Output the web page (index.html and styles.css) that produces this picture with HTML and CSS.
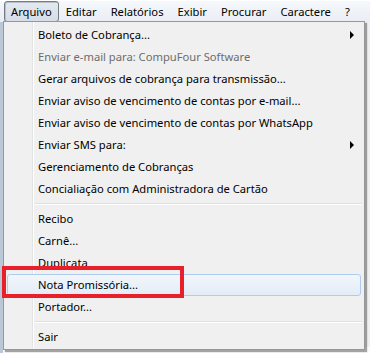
FILE: index.html
```html
<!DOCTYPE html>
<html lang="pt-BR">
<head>
  <meta charset="UTF-8">
  <title>Cobrança - Menu Arquivo</title>
  <link rel="stylesheet" href="styles.css">
</head>
<body>

  <div class="menubar">
    <span class="top-item active">Arquivo</span>
    <span class="top-item">Editar</span>
    <span class="top-item">Relatórios</span>
    <span class="top-item">Exibir</span>
    <span class="top-item">Procurar</span>
    <span class="top-item">Caractere</span>
    <span class="top-item">?</span>
  </div>

  <div class="workspace">
    <div class="grid-row"></div>
  </div>

  <!-- dropdown of the Arquivo menu -->
  <div class="dropdown">
    <div class="item has-sub">Boleto de Cobrança...</div>
    <div class="item disabled">Enviar e-mail para: CompuFour Software</div>
    <div class="item">Gerar arquivos de cobrança para transmissão...</div>
    <div class="item">Enviar aviso de vencimento de contas por e-mail...</div>
    <div class="item">Enviar aviso de vencimento de contas por WhatsApp</div>
    <div class="item has-sub">Enviar SMS para:</div>
    <div class="item">Gerenciamento de Cobranças</div>
    <div class="item">Concialiação com Administradora de Cartão</div>
    <div class="separator"></div>
    <div class="item">Recibo</div>
    <div class="item">Carnê...</div>
    <div class="item">Duplicata</div>
    <div class="item hover">Nota Promissória...</div>
    <div class="item">Portador...</div>
    <div class="separator"></div>
    <div class="item">Sair</div>
  </div>

  <div class="callout"></div>

</body>
</html>
```

FILE: styles.css
```css
html {
  overflow: hidden;
}

body {
  font-family: 'Noto Sans', 'Open Sans', sans-serif;
  font-size: 11.2px;
  color: #000;
  background-color: #f0f0f0;
  margin: 0;
  padding: 0;
  width: 370px;
  height: 353px;
  overflow: hidden;
  position: relative;
}

.menubar {
  height: 22px;
  display: flex;
  align-items: center;
  padding-left: 4px;
  background: linear-gradient(#f5f8fc, #e9eef4);
  border-top: 1px solid #fff;
  box-sizing: border-box;
}

.top-item {
  padding: 0 6px;
  height: 19px;
  line-height: 19px;
  border: 1px solid transparent;
  border-radius: 3px;
}

.top-item.active {
  border-color: #737b84;
  background: linear-gradient(#e4e9ef, #d6dde6);
  box-shadow: inset 1px 1px 0 #b8c1cb;
}

.workspace {
  height: 331px;
  box-sizing: border-box;
  padding-top: 325px;
  background: #eef0f2;
  border-left: 3px solid #b9c7d6;
}

.grid-row {
  height: 6px;
  background: #fbfbfb;
}

.dropdown {
  position: absolute;
  left: 3px;
  top: 21px;
  padding: 2px 2px 1px;
  box-sizing: border-box;
  width: 362px;
  background-color: #f0f0f0;
  border: 1px solid #979797;
  box-shadow: 2px 2px 1px rgba(0, 0, 0, 0.35);
  background-image: linear-gradient(90deg, transparent 28px, #e2e3e3 28px, #e2e3e3 29px, #ffffff 29px, #ffffff 30px, transparent 30px);
}

.item {
  height: 22px;
  line-height: 20px;
  padding-left: 30px;
  position: relative;
  white-space: nowrap;
  box-sizing: border-box;
  border: 1px solid transparent;
  border-radius: 3px;
  margin-left: 1px;
  margin-right: 1px;
}

.item.disabled {
  color: #6d6d6d;
}

.item.has-sub::after {
  content: "";
  position: absolute;
  right: 6px;
  top: 6px;
  border-left: 4px solid #000;
  border-top: 4px solid transparent;
  border-bottom: 4px solid transparent;
}

.item.hover {
  border-color: #aeccf0;
  background: linear-gradient(#f2f6fb, #e3ecf7);
}

.separator {
  height: 8px;
  margin-left: 29px;
  background: linear-gradient(transparent 3px, #e0e0e0 3px, #e0e0e0 4px, #ffffff 4px, #ffffff 5px, transparent 5px);
}

.callout {
  position: absolute;
  left: 2px;
  top: 266px;
  width: 182px;
  height: 32px;
  border: 4px solid #e8202a;
  box-sizing: border-box;
}
```
